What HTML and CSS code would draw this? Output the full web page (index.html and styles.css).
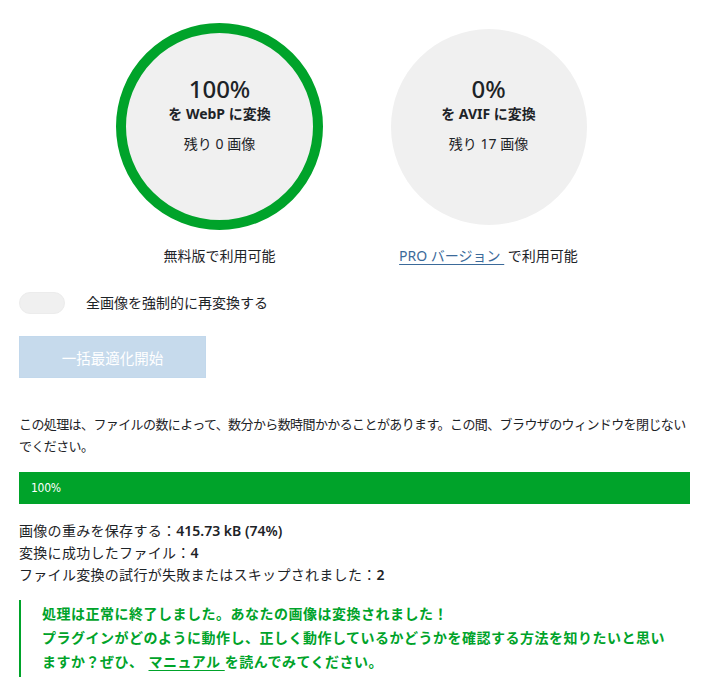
FILE: index.html
```html
<!DOCTYPE html>
<html lang="ja">
<head>
<meta charset="utf-8">
<title>一括最適化</title>
<link rel="stylesheet" href="styles.css">
</head>
<body>
<div class="page">
  <div class="stats-row">
    <div class="col">
      <div class="ring">
        <div class="circle done">
          <div class="pct">100%</div>
          <div class="fmt">を WebP に変換</div>
          <div class="left">残り 0 画像</div>
        </div>
      </div>
      <div class="avail">無料版で利用可能</div>
    </div>
    <div class="col">
      <div class="ring">
        <div class="circle pending">
          <div class="pct">0%</div>
          <div class="fmt">を AVIF に変換</div>
          <div class="left">残り 17 画像</div>
        </div>
      </div>
      <div class="avail"><a class="pro" href="#">PRO バージョン&nbsp;</a>&nbsp;で利用可能</div>
    </div>
  </div>

  <label class="toggle-row">
    <span class="toggle"></span>
    <span class="toggle-label">全画像を強制的に再変換する</span>
  </label>

  <button class="start" type="button" disabled>一括最適化開始</button>

  <p class="note">この処理は、ファイルの数によって、数分から数時間かかることがあります。この間、ブラウザのウィンドウを閉じないでください。</p>

  <div class="bar"><span class="bar-text">100%</span></div>

  <div class="results">
    <div>画像の重みを保存する：<strong>415.73 kB (74%)</strong></div>
    <div>変換に成功したファイル：<strong>4</strong></div>
    <div>ファイル変換の試行が失敗またはスキップされました：<strong>2</strong></div>
  </div>

  <div class="success">
    <p>処理は正常に終了しました。あなたの画像は変換されました！<br>プラグインがどのように動作し、正しく動作しているかどうかを確認する方法を知りたいと思い<br>ますか？ぜひ、<a href="#" class="manual">マニュアル&nbsp;</a>を読んでみてください。</p>
  </div>
</div>
</body>
</html>
```

FILE: styles.css
```css
* { box-sizing: border-box; }

html, body {
  margin: 0;
  padding: 0;
  background: #ffffff;
}

body {
  font-family: "Noto Sans", "Noto Sans CJK JP", sans-serif;
  color: #1d2327;
  font-size: 14px;
}

.page {
  width: 710px;
  padding: 0 20px 0 19px;
}

.stats-row {
  display: flex;
  gap: 62px;
  padding-left: 97px;
  padding-top: 23px;
}

.col {
  width: 207px;
  display: flex;
  flex-direction: column;
  align-items: center;
}

.ring {
  width: 207px;
  height: 207px;
  display: flex;
  align-items: center;
  justify-content: center;
}

.circle {
  border-radius: 50%;
  background: #f0f0f0;
  display: flex;
  flex-direction: column;
  align-items: center;
  justify-content: center;
  padding-bottom: 26px;
}

.circle.done {
  width: 207px;
  height: 207px;
  border: 10px solid #00a32a;
}

.circle.pending {
  width: 196px;
  height: 196px;
}

.pct {
  font-size: 24px;
  line-height: 30px;
  font-weight: 500;
  color: #1d2327;
}

.fmt {
  font-size: 14px;
  line-height: 20px;
  font-weight: 700;
  color: #1d2327;
}

.left {
  font-size: 14px;
  line-height: 20px;
  margin-top: 10px;
  color: #1d2327;
}

.avail {
  margin-top: 16px;
  font-size: 14px;
  line-height: 20px;
  white-space: nowrap;
  color: #1d2327;
}

.pro {
  color: #3b6a9a;
  text-decoration: underline;
  text-underline-offset: 3px;
}

.toggle-row {
  display: flex;
  align-items: center;
  gap: 21px;
  margin-top: 26px;
  height: 22px;
}

.toggle {
  width: 46px;
  height: 22px;
  border-radius: 11px;
  background: #f0f0f0;
  border: 1px solid #ececec;
}

.toggle-label {
  font-size: 14px;
  line-height: 20px;
  color: #1d2327;
}

.start {
  display: block;
  margin-top: 22px;
  width: 187px;
  height: 42px;
  border: 1px solid #c2d8ec;
  background: #c6daec;
  color: #ffffff;
  font-family: "Noto Sans", "Noto Sans CJK JP", sans-serif;
  font-size: 14.5px;
  padding: 0;
  border-radius: 0;
}

.note {
  margin: 35px 0 0;
  font-size: 13px;
  line-height: 22px;
  letter-spacing: -0.6px;
  color: #1d2327;
}

.bar {
  margin-top: 15px;
  height: 32px;
  background: #00a32a;
  display: flex;
  align-items: center;
  padding-left: 12px;
}

.bar-text {
  color: #ffffff;
  font-family: "DejaVu Sans Condensed", "Liberation Sans", sans-serif;
  font-size: 12px;
  letter-spacing: -0.3px;
}

.results {
  margin-top: 16px;
  font-size: 14px;
  line-height: 22px;
  letter-spacing: 0.3px;
  color: #1d2327;
}

.results strong {
  font-weight: 600;
  letter-spacing: 0;
}

.success {
  margin-top: 14px;
  border-left: 2px solid #00a32a;
  padding: 2px 18px 3px 21px;
}

.success p {
  margin: 0;
  width: 640px;
  color: #00a32a;
  font-weight: 700;
  font-size: 14px;
  line-height: 24px;
  letter-spacing: 0.5px;
}

.manual {
  color: #00a32a;
  text-decoration: underline;
  text-underline-offset: 3px;
  margin-left: 5px;
}
```
